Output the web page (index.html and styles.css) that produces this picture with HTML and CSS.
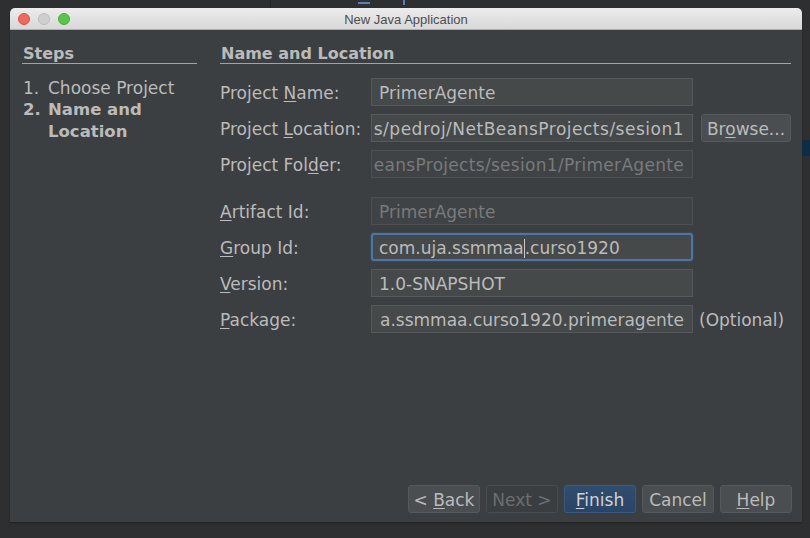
FILE: index.html
```html
<!DOCTYPE html>
<html>
<head>
<meta charset="utf-8">
<title>New Java Application</title>
<link rel="stylesheet" href="styles.css">
</head>
<body>
<div class="desktop">
  <div class="deco deco-vline"></div>
  <div class="deco deco-blue1"></div>
  <div class="deco deco-blue2"></div>
  <div class="deco deco-band"></div>
  <div class="window">
    <div class="titlebar">
      <div class="lights">
        <span class="light red"></span>
        <span class="light gray"></span>
        <span class="light green"></span>
      </div>
      <div class="title">New Java Application</div>
      <div></div>
    </div>
    <div class="body">
      <div class="main">
        <aside class="steps">
          <div class="heading">Steps</div>
          <ol class="step-list">
            <li><span class="num">1.</span><span>Choose Project</span></li>
            <li class="current"><span class="num">2.</span><span>Name and Location</span></li>
          </ol>
        </aside>
        <section class="panel">
          <div class="heading">Name and Location</div>
          <div class="form">
            <div class="label">Project <u>N</u>ame:</div>
            <div class="field"><span>PrimerAgente</span></div>
            <div></div>

            <div class="label">Project <u>L</u>ocation:</div>
            <div class="field end"><span class="wide">s/pedroj/NetBeansProjects/sesion1</span></div>
            <div class="extra"><div class="button browse"><span>Br<u>o</u>wse...</span></div></div>

            <div class="label">Project Fol<u>d</u>er:</div>
            <div class="field end disabled"><span class="mid">eansProjects/sesion1/PrimerAgente</span></div>
            <div></div>
          </div>
          <div class="form form2">
            <div class="label"><u>A</u>rtifact Id:</div>
            <div class="field disabled"><span>PrimerAgente</span></div>
            <div></div>

            <div class="label"><u>G</u>roup Id:</div>
            <div class="field focused"><span>com.uja.ssmmaa<span class="caret"></span>.curso1920</span></div>
            <div></div>

            <div class="label"><u>V</u>ersion:</div>
            <div class="field"><span>1.0-SNAPSHOT</span></div>
            <div></div>

            <div class="label"><u>P</u>ackage:</div>
            <div class="field end"><span>a.ssmmaa.curso1920.primeragente</span></div>
            <div class="extra optional">(Optional)</div>
          </div>
        </section>
      </div>
      <div class="buttons">
        <div class="button"><span>&lt; <u>B</u>ack</span></div>
        <div class="button disabled"><span>Next &gt;</span></div>
        <div class="button primary"><span><u>F</u>inish</span></div>
        <div class="button"><span>Cancel</span></div>
        <div class="button"><span><u>H</u>elp</span></div>
      </div>
    </div>
  </div>
</div>
</body>
</html>
```

FILE: styles.css
```css
* { box-sizing: border-box; }
html, body { margin: 0; padding: 0; }
body {
  background: #2d2f31;
  font-family: "DejaVu Sans", "Noto Sans", sans-serif;
}
.desktop {
  position: relative;
  width: 810px;
  height: 538px;
  padding: 8px 8px 16px 10px;
  background: #2d2f31;
  overflow: hidden;
}
.deco { position: absolute; }
.deco-vline { left: 270px; top: 0; width: 1px; height: 8px; background: #222324; }
.deco-blue1 { left: 358px; top: 2px; width: 12px; height: 2px; background: #5b7cb4; }
.deco-blue2 { left: 403px; top: 0; width: 2px; height: 5px; background: #5b7cb4; }
.deco-band { left: 802px; top: 140px; width: 8px; height: 16px; background: #0f2c44; }

.window {
  width: 792px;
  height: 514px;
  display: flex;
  flex-direction: column;
  border-radius: 5px 5px 0 0;
  overflow: hidden;
  box-shadow: 0 1px 2px rgba(0,0,0,0.35);
}
.titlebar {
  height: 22px;
  flex: none;
  display: grid;
  grid-template-columns: 1fr auto 1fr;
  align-items: center;
  background: linear-gradient(#ececec, #d8d8d8);
  border-bottom: 1px solid #aeaeae;
}
.lights { display: flex; gap: 8px; padding-left: 8px; }
.light { width: 12px; height: 12px; border-radius: 50%; display: block; }
.light.red { background: #ed6a5e; border: 1px solid #d6534a; }
.light.gray { background: #cecece; border: 1px solid #bcbcbc; }
.light.green { background: #5cc44c; border: 1px solid #4aa83b; }
.title {
  font-family: "Liberation Sans", Arial, sans-serif;
  font-size: 13px;
  color: #4d4d4d;
  padding-top: 1px;
}

.body {
  flex: 1;
  display: flex;
  flex-direction: column;
  justify-content: space-between;
  background: #3c3f41;
  color: #bbbbbb;
}
.main {
  display: flex;
  gap: 23px;
  padding: 14px 11px 0 12px;
}
.steps { width: 175px; flex: none; }
.panel { flex: 1; }
.heading {
  font-weight: bold;
  font-size: 16px;
  line-height: 19px;
  color: #bbbbbb;
  border-bottom: 1px solid #a3a3a3;
  padding-left: 1px;
}
.step-list {
  list-style: none;
  margin: 13px 0 0;
  padding: 0;
  font-size: 17px;
  line-height: 22px;
}
.step-list li { display: grid; grid-template-columns: 25px 1fr; padding-left: 1px; }
.step-list li.current { font-weight: bold; font-size: 16.5px; }

.form {
  margin-top: 14px;
  display: grid;
  grid-template-columns: 151px 322px 1fr;
  grid-auto-rows: 28px;
  row-gap: 8px;
  align-items: center;
  font-size: 17px;
}
.form2 { margin-top: 19px; }
.label { white-space: nowrap; color: #bbbbbb; padding-top: 2px; }
u { text-decoration-thickness: 1px; text-underline-offset: 2px; }
.field {
  height: 28px;
  display: flex;
  align-items: center;
  padding: 2px 8px 0 7px;
  background: #45494a;
  border: 1px solid #56595b;
  white-space: nowrap;
  overflow: hidden;
  color: #bbbbbb;
}
.field.end { justify-content: flex-end; padding-right: 8px; }
.wide { letter-spacing: 0.5px; }
.mid { letter-spacing: 0.3px; }
.field.disabled { background: #404345; border-color: #4d5052; color: #787a7c; }
.field.focused {
  border: 2px solid #4a76a8;
  border-radius: 3px;
  padding: 1px 7px 0 6px;
  box-shadow: 0 0 2px rgba(74,118,168,0.6);
}
.caret { display: inline-block; width: 1px; height: 19px; background: #c8c8c8; vertical-align: -4px; }
.extra { padding-left: 8px; }
.optional { padding-left: 6px; white-space: nowrap; padding-top: 2px; }

.button {
  height: 28px;
  display: flex;
  align-items: center;
  justify-content: center;
  padding-top: 2px;
  font-size: 17px;
  color: #bbbbbb;
  background: #4a4e50;
  border: 1px solid #56595b;
  border-radius: 3px;
  white-space: nowrap;
}
.browse { width: 90px; }
.buttons {
  display: flex;
  justify-content: flex-end;
  gap: 6px;
  padding: 0 10px 9px 0;
}
.buttons .button { width: 72px; }
.button.disabled { background: #3b3e40; border-color: #4a4d4f; color: #6b6e70; }
.button.primary {
  background: linear-gradient(#2f4d70, #2a4465);
  border-color: #3a5a80;
  color: #d2d2d2;
}
```
